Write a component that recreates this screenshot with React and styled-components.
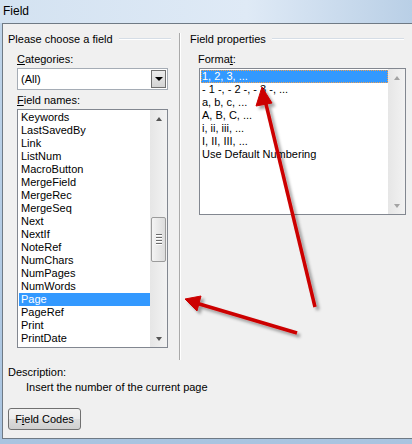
import React from 'react';
import styled, { createGlobalStyle } from 'styled-components';

const fieldNames = [
    'Keywords', 'LastSavedBy', 'Link', 'ListNum', 'MacroButton', 'MergeField',
    'MergeRec', 'MergeSeq', 'Next', 'NextIf', 'NoteRef', 'NumChars',
    'NumPages', 'NumWords', 'Page', 'PageRef', 'Print', 'PrintDate',
];

const formats = [
    '1, 2, 3, ...', '- 1 -, - 2 -, - 3 -, ...', 'a, b, c, ...', 'A, B, C, ...',
    'i, ii, iii, ...', 'I, II, III, ...', 'Use Default Numbering',
];

const App = () => {
    return (
        <Window>
            <GlobalStyle />
            <TitleBar>Field</TitleBar>
            <Body>
                <Columns>
                    <LeftColumn>
                        <GroupHeader>Please choose a field</GroupHeader>
                        <Label><u>C</u>ategories:</Label>
                        <Combo>
                            <ComboText>(All)</ComboText>
                            <ComboButton><DownGlyph /></ComboButton>
                        </Combo>
                        <Label gap={3}><u>F</u>ield names:</Label>
                        <ListBox width={151} height={239}>
                            <Items indent={3}>
                                {fieldNames.map((name) => (
                                    <Item key={name} selected={name === 'Page'}>{name}</Item>
                                ))}
                            </Items>
                            <ScrollBar>
                                <ArrowUp />
                                <Track>
                                    <Thumb>
                                        <Grip /><Grip /><Grip /><Grip />
                                    </Thumb>
                                </Track>
                                <ArrowDown />
                            </ScrollBar>
                        </ListBox>
                    </LeftColumn>
                    <Divider />
                    <RightColumn>
                        <GroupHeader>Field properties</GroupHeader>
                        <Label indent={8}>Forma<u>t</u>:</Label>
                        <ListBox width={207} height={147} indentLeft={1}>
                            <Items indent={2}>
                                {formats.map((f, i) => (
                                    <Item key={f} selected={i === 0} focused={i === 0}>{f}</Item>
                                ))}
                            </Items>
                            <ScrollBar>
                                <ArrowUp disabled />
                                <Track />
                                <ArrowDown disabled />
                            </ScrollBar>
                        </ListBox>
                    </RightColumn>
                </Columns>
                <Description>
                    <DescLabel>Description:</DescLabel>
                    <DescText>Insert the number of the current page</DescText>
                </Description>
                <Button>F<u>i</u>eld Codes</Button>
            </Body>
            <Arrows viewBox="0 0 412 444" width="412" height="444">
                <defs>
                    <filter id="shadow" x="-20%" y="-20%" width="140%" height="140%">
                        <feDropShadow dx="3" dy="3" stdDeviation="1.6" floodColor="#000" floodOpacity="0.35" />
                    </filter>
                </defs>
                <g filter="url(#shadow)" fill="#cc0000" stroke="#cc0000">
                    <line x1="315" y1="307" x2="265" y2="100" strokeWidth="3.5" />
                    <polygon points="262,87 256,106 272,103" strokeWidth="1" strokeLinejoin="round" />
                    <line x1="297" y1="333" x2="196" y2="303" strokeWidth="3.5" />
                    <polygon points="185,299 201,296 197,311" strokeWidth="1" strokeLinejoin="round" />
                </g>
            </Arrows>
        </Window>
    );
};

export default App;

const GlobalStyle = createGlobalStyle`
    body {
        margin: 0;
        font-family: "Liberation Sans", Arial, sans-serif;
        font-size: 11px;
        color: #000;
    }
`;

const Window = styled.div`
    position: relative;
    width: 412px;
    height: 444px;
    overflow: hidden;
    background: linear-gradient(#c0d5ea, #a9c4e0);
`;

const TitleBar = styled.div`
    height: 23px;
    padding-left: 3px;
    line-height: 22px;
    font-size: 12px;
    background: linear-gradient(90deg, #d3e2f1 0%, #dfeaf6 60%, #b9cfe6 100%);
`;

const Body = styled.div`
    margin-left: 2px;
    height: 414px;
    background: #f0f0f0;
    border-top: 1px solid #6f7a85;
    border-left: 1px solid #6f7a85;
    border-bottom: 1px solid #6f7a85;
    display: flex;
    flex-direction: column;
`;

const Columns = styled.div`
    display: flex;
    height: 336px;
`;

const LeftColumn = styled.div`
    width: 176px;
    padding: 8px 0 0 5px;
    box-sizing: border-box;
    display: flex;
    flex-direction: column;
`;

const RightColumn = styled.div`
    flex: 1;
    padding: 8px 0 0 9px;
    display: flex;
    flex-direction: column;
`;

const Divider = styled.div`
    width: 1px;
    margin-top: 9px;
    height: 327px;
    background: #a9a9a9;
    border-right: 1px solid #fff;
`;

const GroupHeader = styled.div`
    display: flex;
    align-items: center;
    height: 14px;
    white-space: nowrap;
    margin-right: 8px;

    &::after {
        content: '';
        flex: 1;
        margin-left: 6px;
        height: 1px;
        background: #d5dde6;
        border-bottom: 1px solid #fff;
    }
`;

const Label = styled.div`
    margin: ${({ gap }) => gap || 6}px 0 2px ${({ indent }) => indent || 9}px;
    height: 14px;
    line-height: 14px;
`;

const Combo = styled.div`
    margin-left: 9px;
    width: 151px;
    height: 22px;
    box-sizing: border-box;
    border: 1px solid #a5acb5;
    background: #fff;
    display: flex;
    align-items: center;
    justify-content: space-between;
`;

const ComboText = styled.span`
    padding-left: 3px;
`;

const ComboButton = styled.div`
    width: 15px;
    height: 18px;
    margin-right: 1px;
    box-sizing: border-box;
    border: 1px solid #707070;
    background: linear-gradient(#ececec, #d4d4d4);
    display: flex;
    align-items: center;
    justify-content: center;
`;

const DownGlyph = styled.span`
    width: 0;
    height: 0;
    border-left: 4px solid transparent;
    border-right: 4px solid transparent;
    border-top: 4px solid #000;
`;

const ListBox = styled.div`
    margin-left: ${({ indentLeft }) => (indentLeft !== undefined ? indentLeft + 8 : 9)}px;
    width: ${({ width }) => width}px;
    height: ${({ height }) => height}px;
    box-sizing: border-box;
    border: 1px solid #828790;
    background: #fff;
    display: flex;
`;

const Items = styled.div`
    flex: 1;
    padding: 1px 0 0 1px;
    --indent: ${({ indent }) => indent}px;
`;

const Item = styled.div`
    height: 13px;
    line-height: 13px;
    padding-left: calc(var(--indent) - 1px);
    white-space: nowrap;
    box-sizing: border-box;
    background: ${({ selected }) => (selected ? '#3399ff' : 'transparent')};
    color: ${({ selected }) => (selected ? '#fff' : '#000')};
    outline: ${({ focused }) => (focused ? '1px dotted #f0a050' : 'none')};
    outline-offset: -1px;
`;

const ScrollBar = styled.div`
    width: 17px;
    background: linear-gradient(90deg, #e6e6e6, #f2f2f2);
    display: flex;
    flex-direction: column;
`;

const Arrow = styled.div`
    height: 17px;
    display: flex;
    align-items: center;
    justify-content: center;

    &::before {
        content: '';
        border-left: 3.5px solid transparent;
        border-right: 3.5px solid transparent;
    }
`;

const ArrowUp = styled(Arrow)`
    &::before {
        border-bottom: 4px solid ${({ disabled }) => (disabled ? '#a3a3a3' : '#555')};
    }
`;

const ArrowDown = styled(Arrow)`
    &::before {
        border-top: 4px solid ${({ disabled }) => (disabled ? '#a3a3a3' : '#555')};
    }
`;

const Track = styled.div`
    flex: 1;
    display: flex;
    flex-direction: column;
`;

const Thumb = styled.div`
    margin: 90px 1px 0 1px;
    height: 45px;
    box-sizing: border-box;
    border: 1px solid #9b9b9b;
    border-radius: 2px;
    background: linear-gradient(90deg, #f4f4f4, #dcdcdc);
    display: flex;
    flex-direction: column;
    align-items: center;
    justify-content: center;
    gap: 1px;
`;

const Grip = styled.div`
    width: 6px;
    height: 1px;
    background: #6c6c6c;
    border-bottom: 1px solid #fff;
`;

const Description = styled.div`
    padding: 5px 0 0 5px;
`;

const DescLabel = styled.div`
    height: 14px;
    line-height: 14px;
`;

const DescText = styled.div`
    margin-top: 1px;
    padding-left: 18px;
    height: 14px;
    line-height: 14px;
`;

const Button = styled.div`
    margin: 14px 0 0 5px;
    width: 73px;
    height: 22px;
    box-sizing: border-box;
    border: 1px solid #707070;
    border-radius: 3px;
    background: linear-gradient(#f2f2f2 0%, #ebebeb 50%, #dddddd 51%, #cfcfcf 100%);
    display: flex;
    align-items: center;
    justify-content: center;
`;

const Arrows = styled.svg`
    position: absolute;
    left: 0;
    top: 0;
    pointer-events: none;
`;
